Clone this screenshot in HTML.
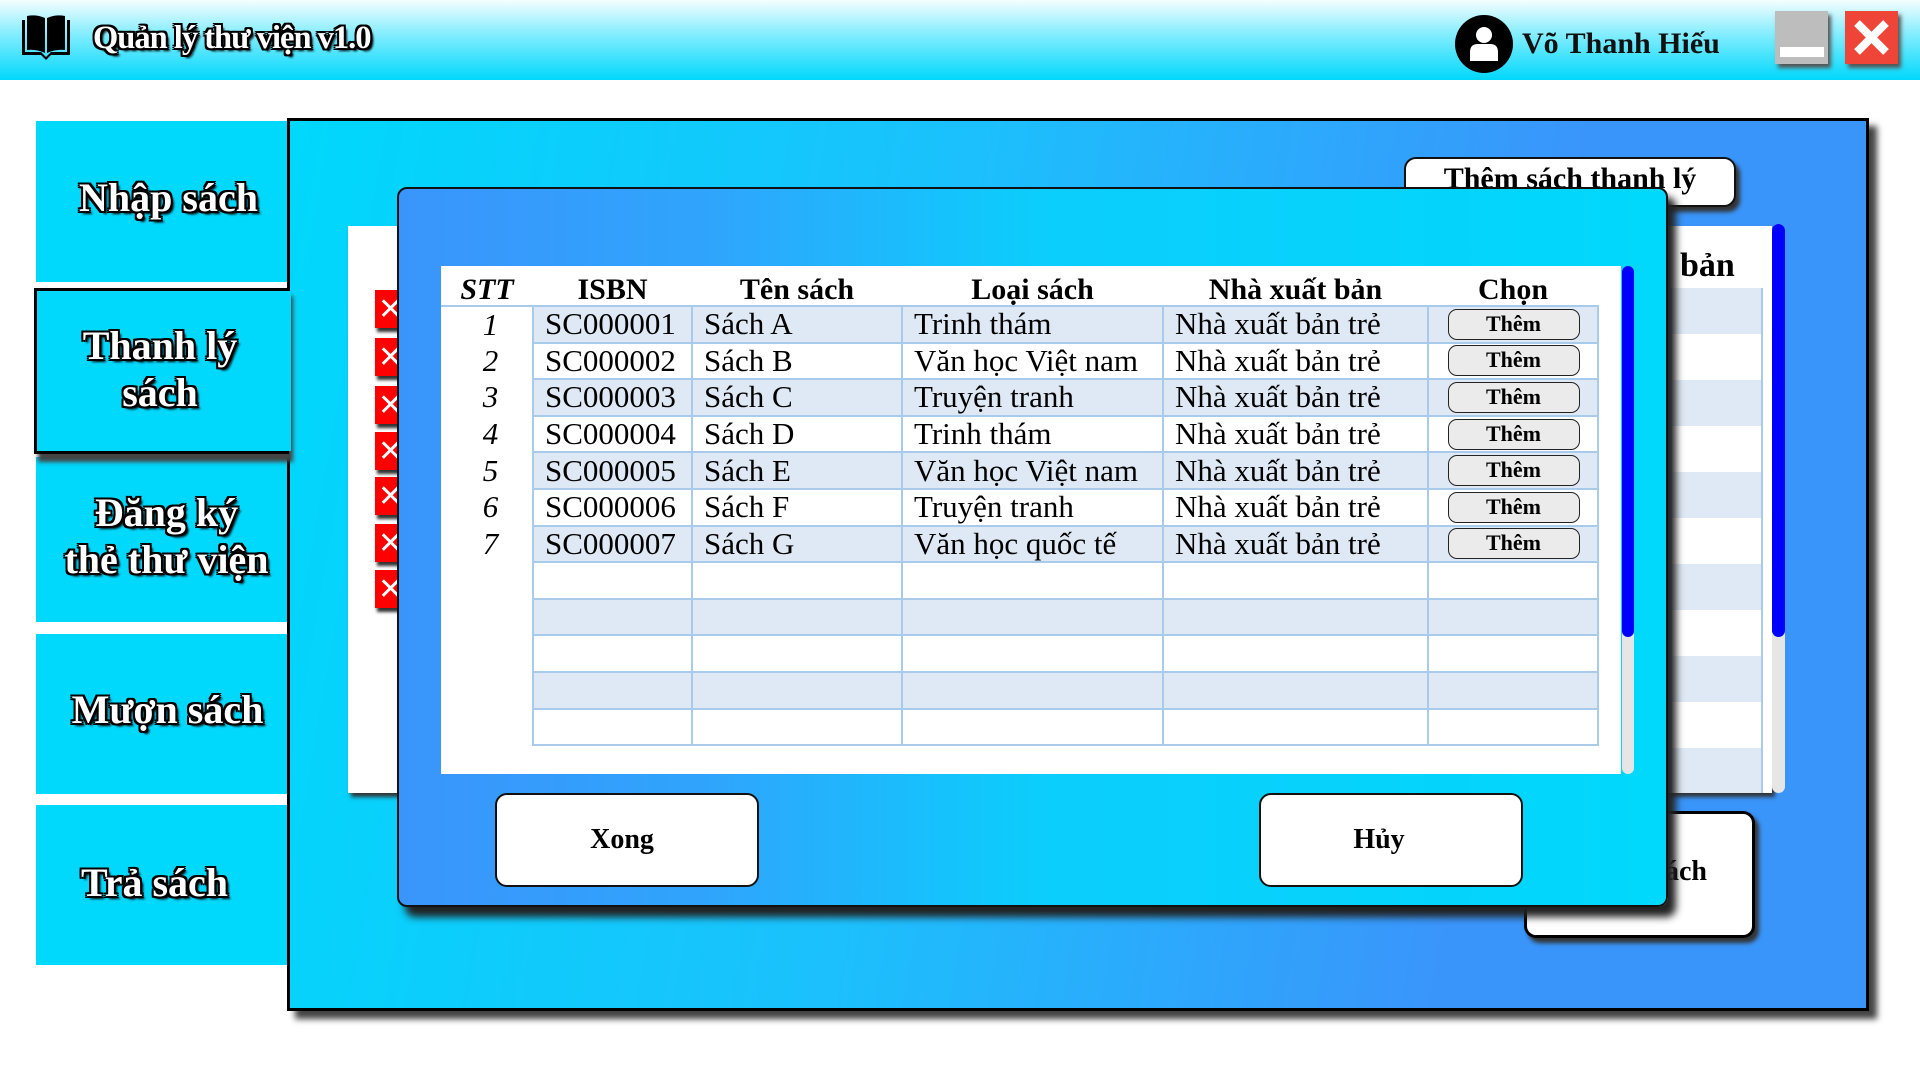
<!DOCTYPE html>
<html><head><meta charset="utf-8">
<style>
*{margin:0;padding:0;box-sizing:border-box}
body{width:1920px;height:1080px;background:#fff;position:relative;overflow:hidden;font-family:"Liberation Serif",serif}
.abs{position:absolute}
.hdr{left:0;top:0;width:1920px;height:80px;background:linear-gradient(#f4feff 0%,#8aeefe 40%,#00d8fc 100%)}
.out{color:#fff;font-weight:bold;text-shadow:-2px -2px 0 #000,2px -2px 0 #000,-2px 2px 0 #000,2px 2px 0 #000,0 2px 0 #000,0 -2px 0 #000,2px 0 0 #000,-2px 0 0 #000,3px 3px 2px #000}
.side{left:36px;width:251px;background:#00d8fc;display:flex;align-items:center;justify-content:center;text-align:center;font-size:40px;line-height:47px}
.panel{left:287px;top:118px;width:1582px;height:893px;border:3px solid #000;background:linear-gradient(100deg,#00d8fc 0%,#1cc0fc 40%,#3a95fb 75%,#3a95fb 100%);box-shadow:8px 8px 6px #444}
.rx{left:375px;width:24px;height:38px;background:#f00;box-shadow:2px 4px 3px #333}
.rx::after{content:"✕";position:absolute;left:3px;top:2px;color:#fff;font:bold 30px "DejaVu Sans",sans-serif}
.dlg{left:397px;top:187px;width:1271px;height:720px;border:2px solid #111;border-radius:10px;background:linear-gradient(90deg,#3a95fb 0%,#2fa5fc 25%,#0ccdfc 50%,#00d8fc 100%);box-shadow:8px 10px 8px #222}
table{border-collapse:collapse;position:absolute;left:441px;top:266px;table-layout:fixed}
td{height:36.6px;border:2px solid #a9cbeb;font-size:31px;padding:0 0 0 11px;white-space:nowrap;overflow:hidden;line-height:30px}
th{height:40px;font-size:30px;font-weight:bold;border-bottom:2px solid #a9cbeb;padding-top:8px;line-height:30px}
td.s{border:none;text-align:center;font-style:italic;padding:0 0 0 8px}
tr.b td:not(.s){background:#dfe9f5}
.btn{display:block;margin:0 auto;width:132px;height:31px;border:1.5px solid #222;border-radius:9px;background:#ebebeb;font:bold 22px "Liberation Serif",serif;text-align:center;line-height:28px;position:relative;left:-5px}
.wbtn{background:#fff;border:2px solid #111;border-radius:12px;display:flex;align-items:center;justify-content:center;font-weight:bold;font-size:28px}
</style></head><body>
<div class="abs hdr"></div>
<svg class="abs" style="left:20px;top:13px" width="52" height="50" viewBox="0 0 52 50">
<path d="M2 7 L2 42 L21 42 L26 47 L31 42 L50 42 L50 7 L47 7 L47 39 L31 39 L26 44 L21 39 L5 39 L5 7 Z" fill="#000"/>
<path d="M7 3 Q16 1 25 5 L25 40 Q16 36 7 37 Z" fill="#000"/>
<path d="M27 5 Q36 1 45 3 L45 37 Q36 36 27 40 Z" fill="#000"/>
</svg>
<div class="abs out" style="left:93px;top:20px;font-size:32.5px;letter-spacing:-1px">Quản lý thư viện v1.0</div>
<svg class="abs" style="left:1455px;top:15px" width="58" height="58" viewBox="0 0 58 58">
<circle cx="29" cy="29" r="29" fill="#000"/>
<circle cx="29" cy="20" r="8" fill="#fff"/>
<path d="M15 46 L15 37 Q15 29 23 29 L35 29 Q43 29 43 37 L43 46 Z" fill="#fff"/>
</svg>
<div class="abs" style="left:1522px;top:27px;font-size:30px;font-weight:bold;color:#111">Võ Thanh Hiếu</div>
<div class="abs" style="left:1775px;top:11px;width:53px;height:53px;background:#bdbdbd;box-shadow:3px 4px 4px #555"><div class="abs" style="left:5px;top:36px;width:44px;height:10px;background:#fff"></div></div>
<div class="abs" style="left:1845px;top:11px;width:53px;height:53px;background:#ef4438;box-shadow:3px 4px 4px #555">
<svg width="53" height="53"><path d="M12 12 L41 41 M41 12 L12 41" stroke="#fff" stroke-width="8"/></svg></div>

<div class="abs side out" style="top:121px;height:161px;padding:0 0 8px 14px">Nhập sách</div>
<div class="abs side out" style="top:457px;height:165px;padding:0 0 8px 10px">Đăng ký<br>thẻ thư viện</div>
<div class="abs side out" style="top:634px;height:160px;padding:0 0 10px 12px">Mượn sách</div>
<div class="abs side out" style="top:805px;height:160px;padding:0 14px 6px 0">Trả sách</div>

<div class="abs panel"></div>
<div class="abs side out" style="left:34px;top:288px;width:255px;height:166px;border:3px solid #000;border-right:none;box-shadow:4px 8px 4px #444;z-index:2;padding:0 6px 4px 0">Thanh lý<br>sách</div>
<div class="abs" style="left:287px;top:291px;width:4px;height:160px;background:#00d8fc;z-index:3"></div>

<div class="abs" style="left:348px;top:226px;width:1424px;height:567px;background:#fff;box-shadow:3px 4px 4px #333"></div>
<div class="abs" style="left:1670px;top:288px;width:93px;height:505px;background:repeating-linear-gradient(#dfe9f5 0,#dfe9f5 46px,#fff 46px,#fff 92px);border-left:2px solid #a9cbeb;border-right:2px solid #a9cbeb"></div>
<div class="abs" style="left:1680px;top:247px;font-size:34px;font-weight:bold">bản</div>
<div class="abs" style="left:1772px;top:224px;width:13px;height:569px;background:#e6e6e6;border-radius:7px"></div>
<div class="abs" style="left:1772px;top:224px;width:13px;height:413px;background:#0000ff;border-radius:7px"></div>
<div class="abs rx" style="top:290px"></div><div class="abs rx" style="top:338px"></div><div class="abs rx" style="top:386px"></div><div class="abs rx" style="top:432px"></div><div class="abs rx" style="top:477px"></div><div class="abs rx" style="top:524px"></div><div class="abs rx" style="top:570px"></div>
<div class="abs wbtn" style="left:1404px;top:157px;width:332px;height:50px;align-items:flex-start;padding-top:3px;font-size:30px;box-shadow:4px 5px 4px #333">Thêm sách thanh lý</div>
<div class="abs wbtn" style="left:1524px;top:811px;width:231px;height:127px;border:3px solid #000;box-shadow:4px 5px 4px #333;justify-content:flex-end;padding-right:45px;padding-bottom:6px">sách</div>

<div class="abs dlg"></div>
<div class="abs" style="left:441px;top:266px;width:1180px;height:508px;background:#fff"></div>
<div class="abs" style="left:1622px;top:266px;width:12px;height:508px;background:#e6e6e6;border-radius:6px"></div>
<div class="abs" style="left:1622px;top:266px;width:12px;height:371px;background:#0000ff;border-radius:6px"></div>
<table>
<colgroup><col style="width:92px"><col style="width:159px"><col style="width:210px"><col style="width:261px"><col style="width:265px"><col style="width:170px"></colgroup>
<tr><th style="font-style:italic">STT</th><th>ISBN</th><th>Tên sách</th><th>Loại sách</th><th>Nhà xuất bản</th><th>Chọn</th></tr>
<tr class="b"><td class="s">1</td><td>SC000001</td><td>Sách A</td><td>Trinh thám</td><td>Nhà xuất bản trẻ</td><td><span class="btn">Thêm</span></td></tr>
<tr><td class="s">2</td><td>SC000002</td><td>Sách B</td><td>Văn học Việt nam</td><td>Nhà xuất bản trẻ</td><td><span class="btn">Thêm</span></td></tr>
<tr class="b"><td class="s">3</td><td>SC000003</td><td>Sách C</td><td>Truyện tranh</td><td>Nhà xuất bản trẻ</td><td><span class="btn">Thêm</span></td></tr>
<tr><td class="s">4</td><td>SC000004</td><td>Sách D</td><td>Trinh thám</td><td>Nhà xuất bản trẻ</td><td><span class="btn">Thêm</span></td></tr>
<tr class="b"><td class="s">5</td><td>SC000005</td><td>Sách E</td><td>Văn học Việt nam</td><td>Nhà xuất bản trẻ</td><td><span class="btn">Thêm</span></td></tr>
<tr><td class="s">6</td><td>SC000006</td><td>Sách F</td><td>Truyện tranh</td><td>Nhà xuất bản trẻ</td><td><span class="btn">Thêm</span></td></tr>
<tr class="b"><td class="s">7</td><td>SC000007</td><td>Sách G</td><td>Văn học quốc tế</td><td>Nhà xuất bản trẻ</td><td><span class="btn">Thêm</span></td></tr>
<tr><td class="s"></td><td></td><td></td><td></td><td></td><td></td></tr>
<tr class="b"><td class="s"></td><td></td><td></td><td></td><td></td><td></td></tr>
<tr><td class="s"></td><td></td><td></td><td></td><td></td><td></td></tr>
<tr class="b"><td class="s"></td><td></td><td></td><td></td><td></td><td></td></tr>
<tr><td class="s"></td><td></td><td></td><td></td><td></td><td></td></tr>
</table>
<div class="abs wbtn" style="left:495px;top:793px;width:264px;height:94px;padding-right:10px">Xong</div>
<div class="abs wbtn" style="left:1259px;top:793px;width:264px;height:94px;padding-right:24px">Hủy</div>
</body></html>
